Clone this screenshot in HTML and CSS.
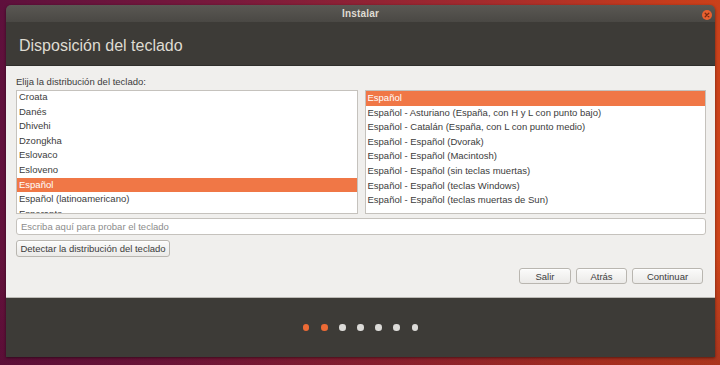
FILE: index.html
```html
<!DOCTYPE html>
<html lang="es">
<head>
<meta charset="utf-8">
<title>Instalar</title>
<link rel="stylesheet" href="styles.css">
</head>
<body>
<div class="window">
  <div class="titlebar">
    <span class="title">Instalar</span>
    <span class="close"><svg width="10" height="10" viewBox="0 0 10 10"><circle cx="5" cy="5" r="5" fill="#e9602f"/><path d="M3.2 3.2 L6.8 6.8 M6.8 3.2 L3.2 6.8" stroke="#7a2a10" stroke-width="1.3" stroke-linecap="round"/></svg></span>
  </div>
  <div class="header"><h1 class="heading">Disposición del teclado</h1></div>
  <div class="content">
    <div class="label">Elija la distribución del teclado:</div>
    <div class="lists">
      <div class="list">
        <div class="rows rows-left">
          <div class="row">Croata</div>
          <div class="row">Danés</div>
          <div class="row">Dhivehi</div>
          <div class="row">Dzongkha</div>
          <div class="row">Eslovaco</div>
          <div class="row">Esloveno</div>
          <div class="row selected">Español</div>
          <div class="row">Español (latinoamericano)</div>
          <div class="row">Esperanto</div>
        </div>
      </div>
      <div class="list">
        <div class="rows">
          <div class="row selected">Español</div>
          <div class="row">Español - Asturiano (España, con H y L con punto bajo)</div>
          <div class="row">Español - Catalán (España, con L con punto medio)</div>
          <div class="row">Español - Español (Dvorak)</div>
          <div class="row">Español - Español (Macintosh)</div>
          <div class="row">Español - Español (sin teclas muertas)</div>
          <div class="row">Español - Español (teclas Windows)</div>
          <div class="row">Español - Español (teclas muertas de Sun)</div>
        </div>
      </div>
    </div>
    <input class="entry" type="text" placeholder="Escriba aquí para probar el teclado">
    <div class="detect-row"><button class="btn detect">Detectar la distribución del teclado</button></div>
    <div class="actions">
      <button class="btn act-salir">Salir</button>
      <button class="btn act-atras">Atrás</button>
      <button class="btn act-cont">Continuar</button>
    </div>
  </div>
  <div class="footer">
    <span class="dot on"></span><span class="dot on"></span><span class="dot"></span><span class="dot"></span><span class="dot"></span><span class="dot"></span><span class="dot"></span>
  </div>
</div>
</body>
</html>
```
FILE: styles.css
```css
* { box-sizing: border-box; }
html, body { margin: 0; padding: 0; }
body {
  width: 720px;
  height: 365px;
  overflow: hidden;
  padding: 5px 5px 0 6px;
  font-family: "Liberation Sans", Arial, sans-serif;
  background:
    linear-gradient(180deg, rgba(0,0,0,0) 70%, rgba(60,0,40,0.25) 100%),
    linear-gradient(100deg, #5e103c 0%, #7a1a3c 30%, #a22a2e 60%, #c63c1c 85%, #cf461a 100%);
}
.window {
  width: 709px;
  display: flex;
  flex-direction: column;
  border-radius: 5px 5px 0 0;
  overflow: hidden;
  box-shadow: 0 1px 3px rgba(0,0,0,0.5);
}
.titlebar {
  height: 17px;
  background: linear-gradient(180deg, #5a5853 0%, #4a4844 100%);
  display: flex;
  align-items: center;
  justify-content: center;
  position: relative;
}
.title {
  font-weight: bold;
  font-size: 10px;
  color: #dfdbd2;
  letter-spacing: 0.2px;
}
.close {
  position: absolute;
  right: 3px;
  top: 5px;
  width: 10px;
  height: 10px;
  display: block;
}
.close svg { display: block; }
.header {
  height: 44px;
  background: #3d3b37;
  display: flex;
  align-items: center;
  padding-left: 13px;
  border-bottom: 1px solid #2f2e2b;
}
.heading {
  margin: 0;
  font-weight: normal;
  font-size: 16px;
  color: #dfdbd2;
  padding-top: 4px;
}
.content {
  height: 231px;
  background: #f0efed;
  padding: 9px 9px 0 10px;
  display: flex;
  flex-direction: column;
  color: #3c3c3c;
  font-size: 9.5px;
}
.label {
  height: 15px;
  line-height: 13px;
  color: #3c3c3c;
}
.lists {
  display: flex;
  gap: 7px;
  height: 124px;
}
.list {
  flex: 1;
  background: #fff;
  border: 1px solid #c5c2bd;
  overflow: hidden;
}
.rows-left { margin-top: -1px; }
.row {
  height: 14.6px;
  line-height: 14.6px;
  padding-left: 2px;
  white-space: nowrap;
  color: #3c3c3c;
}
.row.selected {
  background: #f07746;
  color: #fff;
}
.entry {
  margin-top: 4px;
  height: 17px;
  border: 1px solid #c5c2bd;
  border-radius: 3px;
  background: #fff;
  font-family: inherit;
  font-size: 9.5px;
  padding: 0 4px;
  color: #3c3c3c;
  outline: none;
}
.entry::placeholder { color: #8c8c8c; }
.detect-row {
  margin-top: 5px;
  display: flex;
}
.btn {
  font-family: inherit;
  font-size: 9.5px;
  color: #3c3c3c;
  height: 17px;
  padding: 0 2px;
  white-space: nowrap;
  border: 1px solid #b9b6b0;
  border-radius: 3px;
  background: linear-gradient(180deg, #fbfbfa 0%, #ebeae8 100%);
  box-shadow: 0 1px 0 rgba(255,255,255,0.8) inset;
}
.detect { width: 154px; }
.actions {
  margin-top: 11px;
  display: flex;
  justify-content: flex-end;
  gap: 5px;
  padding-right: 3px;
}
.actions .btn { height: 16px; }
.act-salir { width: 52px; }
.act-atras { width: 51px; }
.act-cont { width: 71px; }
.footer {
  height: 60px;
  background: #3d3b37;
  border-top: 1px solid #bcbab5;
  display: flex;
  align-items: center;
  justify-content: center;
  gap: 11.6px;
}
.dot {
  width: 6.5px;
  height: 6.5px;
  border-radius: 50%;
  background: #dcdbd8;
}
.dot.on { background: #ec6a35; }
```
